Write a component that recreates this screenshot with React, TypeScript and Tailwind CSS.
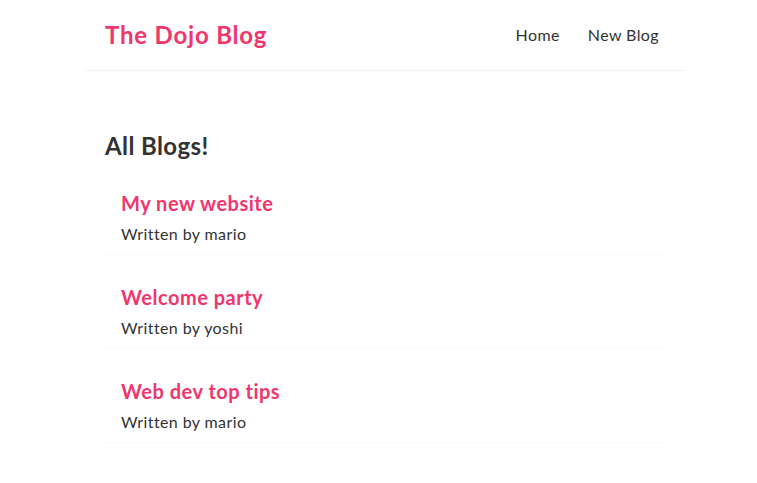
import React from "react";

const blogs = [
  { id: 1, title: "My new website", author: "mario" },
  { id: 2, title: "Welcome party", author: "yoshi" },
  { id: 3, title: "Web dev top tips", author: "mario" },
];

export default function App() {
  return (
    <div className="min-h-screen bg-white pl-[13px] text-[#333] font-['Lato','Noto_Sans',sans-serif]">
      <nav className="mx-auto flex max-w-[600px] items-center border-b border-[#f2f2f2] p-5">
        <h1 className="text-[24px] font-bold leading-[30px] tracking-[0.8px] text-[#f1356d]">The Dojo Blog</h1>
        <div className="ml-auto text-[16px] leading-[20px]">
          <a href="#" className="ml-4 p-1.5 tracking-[0.4px] text-[#333]">Home</a>
          <a href="#" className="ml-4 p-1.5 tracking-[0.4px] text-[#333]">New Blog</a>
        </div>
      </nav>
      <div className="mx-auto my-10 max-w-[600px] p-5">
        <h2 className="text-[24px] font-bold leading-[30px] tracking-[0.4px] text-[#333]">All Blogs!</h2>
        <div className="flex flex-col">
          {blogs.map((b) => (
            <div key={b.id} className="mt-5 border-b border-[#fafafa] px-4 py-2.5">
              <h2 className="mb-2 text-[20px] font-bold leading-[25px] tracking-[0.5px] text-[#f1356d]">{b.title}</h2>
              <p className="text-[16px] leading-[20px] tracking-[0.4px] text-[#333]">Written by {b.author}</p>
            </div>
          ))}
        </div>
      </div>
    </div>
  );
}
